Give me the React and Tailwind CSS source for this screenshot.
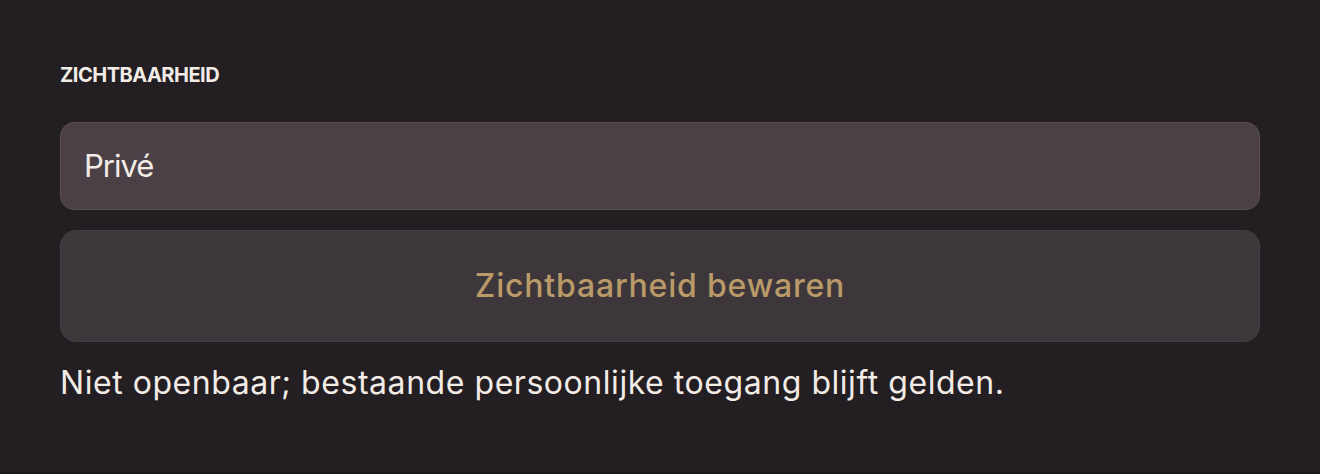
export default function App() {
  return (
    <div
      className="h-[474px] w-full bg-[#231e22] border-b-2 border-[#1b1719] px-[60px] pt-[63px]"
      style={{ fontFamily: 'Inter, "Noto Sans", sans-serif' }}
    >
      <div className="text-[20px] leading-[24px] font-bold text-[#f2ebe6] tracking-[-0.5px]">
        ZICHTBAARHEID
      </div>
      <div className="mt-[35px] flex h-[88px] items-center rounded-[14px] border border-[#574d53] bg-[#4a4046] px-[23px] text-[31px] tracking-[-1px] text-[#f2ebe6]">
        Privé
      </div>
      <button className="mt-[20px] flex h-[112px] w-full items-center justify-center rounded-[16px] border border-[#473f45] bg-[#3d373c] text-[32px] tracking-[0.8px] font-medium text-[#b99a68]">
        Zichtbaarheid bewaren
      </button>
      <p className="mt-[21px] text-[32px] leading-[40px] tracking-[0.55px] text-[#f2ebe6]">
        Niet openbaar; bestaande persoonlijke toegang blijft gelden.
      </p>
    </div>
  );
}
